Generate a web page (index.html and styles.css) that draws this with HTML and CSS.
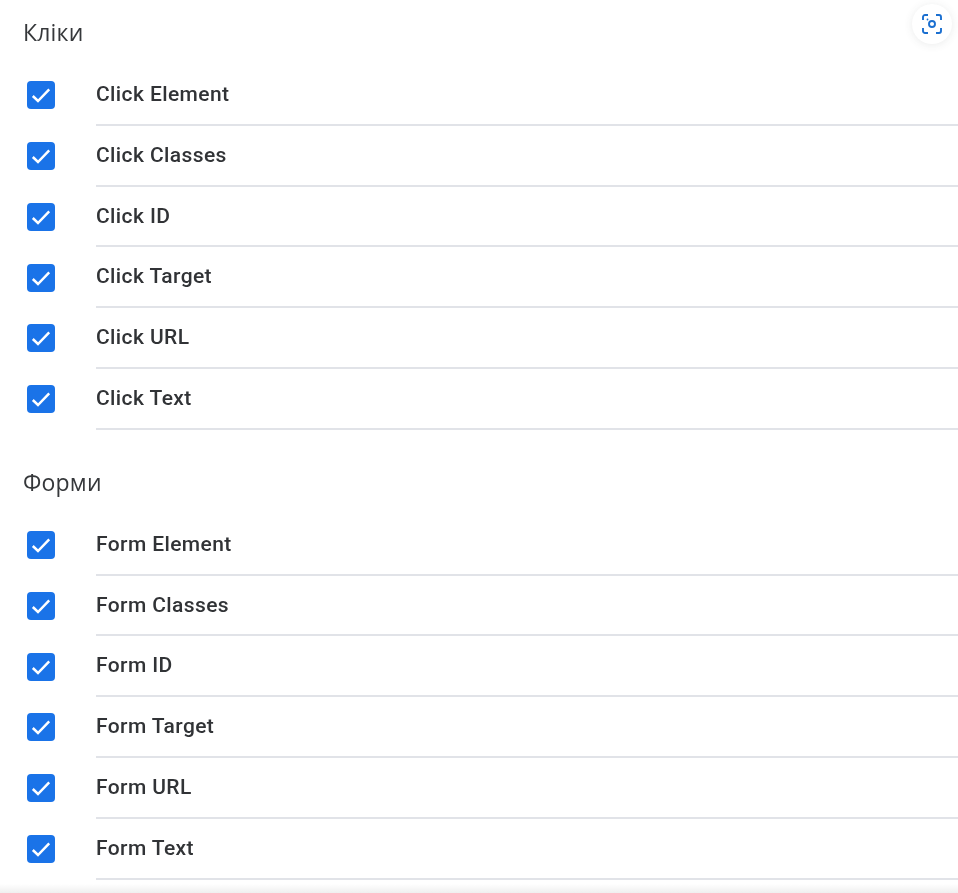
FILE: index.html
```html
<!DOCTYPE html>
<html lang="uk">
<head>
<meta charset="utf-8">
<title>Кліки і форми</title>
<link rel="stylesheet" href="styles.css">
</head>
<body>
<svg class="defs" width="0" height="0" aria-hidden="true"><defs>
<symbol id="check" viewBox="0 0 28 28"><path d="M5.800 15l5.200 5 11.200-11.700" fill="none" stroke="#fff" stroke-width="2.500"/></symbol>
</defs></svg>
<button class="scan" type="button" aria-label="Scan">
<svg viewBox="0 0 20 20" width="20" height="20" fill="none" stroke="#1a6fd0" stroke-width="1.900">
<path d="M1 6V3a2 2 0 0 1 2-2H6M14 1h3a2 2 0 0 1 2 2V6M19 14v3a2 2 0 0 1-2 2H14M6 19H3a2 2 0 0 1-2-2V14"/>
<circle cx="10" cy="10" r="3"/>
<circle cx="5.500" cy="5.500" r=".9" fill="#1a6fd0" stroke="none"/>
</svg>
</button>
<main class="page">
<section class="group">
<h2 class="heading">Кліки</h2>
<ul class="list">
<li class="row"><svg class="box"><use href="#check"/></svg><span class="label">Click Element</span></li>
<li class="row"><svg class="box"><use href="#check"/></svg><span class="label">Click Classes</span></li>
<li class="row"><svg class="box"><use href="#check"/></svg><span class="label">Click ID</span></li>
<li class="row"><svg class="box"><use href="#check"/></svg><span class="label">Click Target</span></li>
<li class="row"><svg class="box"><use href="#check"/></svg><span class="label">Click URL</span></li>
<li class="row"><svg class="box"><use href="#check"/></svg><span class="label">Click Text</span></li>
</ul>
</section>
<section class="group">
<h2 class="heading">Форми</h2>
<ul class="list">
<li class="row"><svg class="box"><use href="#check"/></svg><span class="label">Form Element</span></li>
<li class="row"><svg class="box"><use href="#check"/></svg><span class="label">Form Classes</span></li>
<li class="row"><svg class="box"><use href="#check"/></svg><span class="label">Form ID</span></li>
<li class="row"><svg class="box"><use href="#check"/></svg><span class="label">Form Target</span></li>
<li class="row"><svg class="box"><use href="#check"/></svg><span class="label">Form URL</span></li>
<li class="row"><svg class="box"><use href="#check"/></svg><span class="label">Form Text</span></li>
</ul>
</section>
</main>
<div class="fade"></div>
</body>
</html>
```
FILE: styles.css
```css
html, body { margin: 0; padding: 0; height: 893px; overflow: hidden; background: #fff; }
body { font-family: Roboto, "Noto Sans", sans-serif; color: #313336; }
.defs { position: absolute; }
.page { display: flex; flex-direction: column; gap: 20px; filter: blur(.4px); }
.heading { margin: 0; height: 65px; padding: 19px 0 0 23px; box-sizing: border-box; font: 400 23px/26px "Open Sans", Roboto, sans-serif; letter-spacing: .2px; color: #36383b; }
.list { list-style: none; margin: 0; padding: 0; }
.row { display: flex; height: 60.8px; box-sizing: border-box; }
.box { width: 28px; height: 28px; margin: 16.200px 0 0 27px; background: #1a73e8; border-radius: 4px; flex: none; }
.label { flex: 1; margin-left: 41px; font-size: 21px; line-height: 26px; font-weight: 500; letter-spacing: .4px; color: #313336; padding-top: 16px; border-bottom: 2px solid #e1e3e8; box-sizing: border-box; }
.scan { position: absolute; top: 4px; left: 912px; width: 40px; height: 40px; border: 0; padding: 0; border-radius: 50%; background: #fff; box-shadow: 0 1px 8px rgba(60,64,67,.1); display: flex; align-items: center; justify-content: center; filter: blur(.3px); }
.fade { position: absolute; left: 0; right: 0; bottom: 0; height: 9px; background: linear-gradient(to bottom, rgba(240,240,240,0), #efefef); }
```
